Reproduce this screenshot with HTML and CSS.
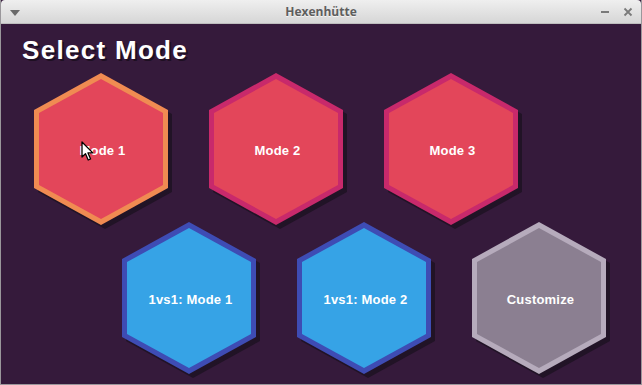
FILE: index.html
```html
<!DOCTYPE html>
<html>
<head>
<meta charset="utf-8">
<link rel="stylesheet" href="styles.css">
</head>
<body>
<div class="window">
  <div class="titlebar">
    <svg class="tb-menu" width="10" height="6" viewBox="0 0 10 6"><polygon points="0,0 10,0 5,6" fill="#6a6a6a"/></svg>
    <div class="tb-title">Hexenhütte</div>
    <div class="tb-controls">
      <svg width="10" height="10" viewBox="0 0 10 10"><rect x="1" y="4" width="8" height="2" fill="#7a7a7a"/></svg>
      <svg width="10" height="10" viewBox="0 0 10 10"><path d="M1.5 1.5 L8.5 8.5 M8.5 1.5 L1.5 8.5" stroke="#7a7a7a" stroke-width="1.8"/></svg>
    </div>
  </div>
  <div class="content">
    <h1 class="heading">Select Mode</h1>
    <div class="row row-top">
      <div class="hex hex-red hex-hover">
        <svg class="hex-shape" width="134" height="152" viewBox="0 0 134 152">
          <polygon class="shadow" points="71,4 138,41 138,119 71,156 4,119 4,41"/>
          <polygon class="edge" points="67,0 134,37 134,115 67,152 0,115 0,37"/>
          <polygon class="fill" points="67,6 129,40 129,112 67,146 5,112 5,40"/>
        </svg>
        <span class="hex-label">Mode 1</span>
        <svg class="cursor" width="14" height="21" viewBox="0 0 14 21"><path d="M1 1 L1 16 L4.5 12.8 L7.2 19 L9.6 18 L7 11.9 L11.8 11.9 Z" fill="#ffffff" stroke="#000000" stroke-width="1.3" stroke-linejoin="round"/></svg>
      </div>
      <div class="hex hex-red">
        <svg class="hex-shape" width="134" height="152" viewBox="0 0 134 152">
          <polygon class="shadow" points="71,4 138,41 138,119 71,156 4,119 4,41"/>
          <polygon class="edge" points="67,0 134,37 134,115 67,152 0,115 0,37"/>
          <polygon class="fill" points="67,6 129,40 129,112 67,146 5,112 5,40"/>
        </svg>
        <span class="hex-label">Mode 2</span>
      </div>
      <div class="hex hex-red">
        <svg class="hex-shape" width="134" height="152" viewBox="0 0 134 152">
          <polygon class="shadow" points="71,4 138,41 138,119 71,156 4,119 4,41"/>
          <polygon class="edge" points="67,0 134,37 134,115 67,152 0,115 0,37"/>
          <polygon class="fill" points="67,6 129,40 129,112 67,146 5,112 5,40"/>
        </svg>
        <span class="hex-label">Mode 3</span>
      </div>
    </div>
    <div class="row row-bottom">
      <div class="hex hex-blue">
        <svg class="hex-shape" width="134" height="152" viewBox="0 0 134 152">
          <polygon class="shadow" points="71,4 138,41 138,119 71,156 4,119 4,41"/>
          <polygon class="edge" points="67,0 134,37 134,115 67,152 0,115 0,37"/>
          <polygon class="fill" points="67,6 129,40 129,112 67,146 5,112 5,40"/>
        </svg>
        <span class="hex-label">1vs1: Mode 1</span>
      </div>
      <div class="hex hex-blue">
        <svg class="hex-shape" width="134" height="152" viewBox="0 0 134 152">
          <polygon class="shadow" points="71,4 138,41 138,119 71,156 4,119 4,41"/>
          <polygon class="edge" points="67,0 134,37 134,115 67,152 0,115 0,37"/>
          <polygon class="fill" points="67,6 129,40 129,112 67,146 5,112 5,40"/>
        </svg>
        <span class="hex-label">1vs1: Mode 2</span>
      </div>
      <div class="hex hex-gray">
        <svg class="hex-shape" width="134" height="152" viewBox="0 0 134 152">
          <polygon class="shadow" points="71,4 138,41 138,119 71,156 4,119 4,41"/>
          <polygon class="edge" points="67,0 134,37 134,115 67,152 0,115 0,37"/>
          <polygon class="fill" points="67,6 129,40 129,112 67,146 5,112 5,40"/>
        </svg>
        <span class="hex-label">Customize</span>
      </div>
    </div>
  </div>
</div>
</body>
</html>
```
FILE: styles.css
```css
html, body {
  margin: 0;
  padding: 0;
}
body {
  width: 642px;
  height: 385px;
  overflow: hidden;
  background: #351a3b;
  font-family: "Liberation Sans", Arial, sans-serif;
}
.window {
  box-sizing: border-box;
  width: 642px;
  height: 385px;
  border-left: 1px solid #9a979b;
  border-right: 1px solid #9a979b;
  border-bottom: 1px solid #9a979b;
  background: #351a3b;
  display: flex;
  flex-direction: column;
  overflow: hidden;
}
.titlebar {
  position: relative;
  height: 24px;
  flex: none;
  box-sizing: border-box;
  background: linear-gradient(#efefef, #d6d6d6);
  border-bottom: 1px solid #bdbdbd;
  border-radius: 4px 4px 0 0;
  display: flex;
  align-items: center;
  justify-content: center;
}
.tb-menu {
  position: absolute;
  left: 9px;
  top: 10px;
}
.tb-title {
  font-family: "Open Sans", sans-serif;
  font-weight: 700;
  font-size: 12px;
  color: #5e5e5e;
  text-shadow: 0 1px 0 #f4f4f4;
}
.tb-controls {
  position: absolute;
  right: 8px;
  top: 7px;
  display: flex;
  gap: 13px;
}
.content {
  flex: 1;
  padding: 11px 0 0 21px;
  display: flex;
  flex-direction: column;
}
.heading {
  margin: 0;
  font-family: "Liberation Sans", Arial, sans-serif;
  font-weight: 700;
  font-size: 26px;
  line-height: 31px;
  letter-spacing: 1.3px;
  color: #ffffff;
  text-shadow: 2px 2px 0 #1e0f22;
}
.row {
  display: flex;
  gap: 41px;
}
.row-top {
  margin-top: 7px;
  padding-left: 12px;
}
.row-bottom {
  margin-top: -3px;
  padding-left: 100px;
}
.hex {
  position: relative;
  width: 134px;
  height: 152px;
  display: flex;
  align-items: center;
  justify-content: center;
}
.hex-shape {
  position: absolute;
  left: 0;
  top: 0;
  overflow: visible;
}
.shadow { fill: #211326; }
.hex-red .edge { fill: #c8296b; }
.hex-red .fill { fill: #e3465a; }
.hex-hover .edge { fill: #f08b52; }
.hex-blue .edge { fill: #3e4cb4; }
.hex-blue .fill { fill: #36a3e6; }
.hex-gray .edge { fill: #b6abbc; }
.hex-gray .fill { fill: #8b7f91; }
.hex-label {
  position: relative;
  margin-top: 3px;
  margin-left: 3px;
  font-weight: 700;
  font-size: 13px;
  letter-spacing: 0.2px;
  color: #ffffff;
}
.cursor {
  position: absolute;
  left: 47px;
  top: 68px;
}
```
